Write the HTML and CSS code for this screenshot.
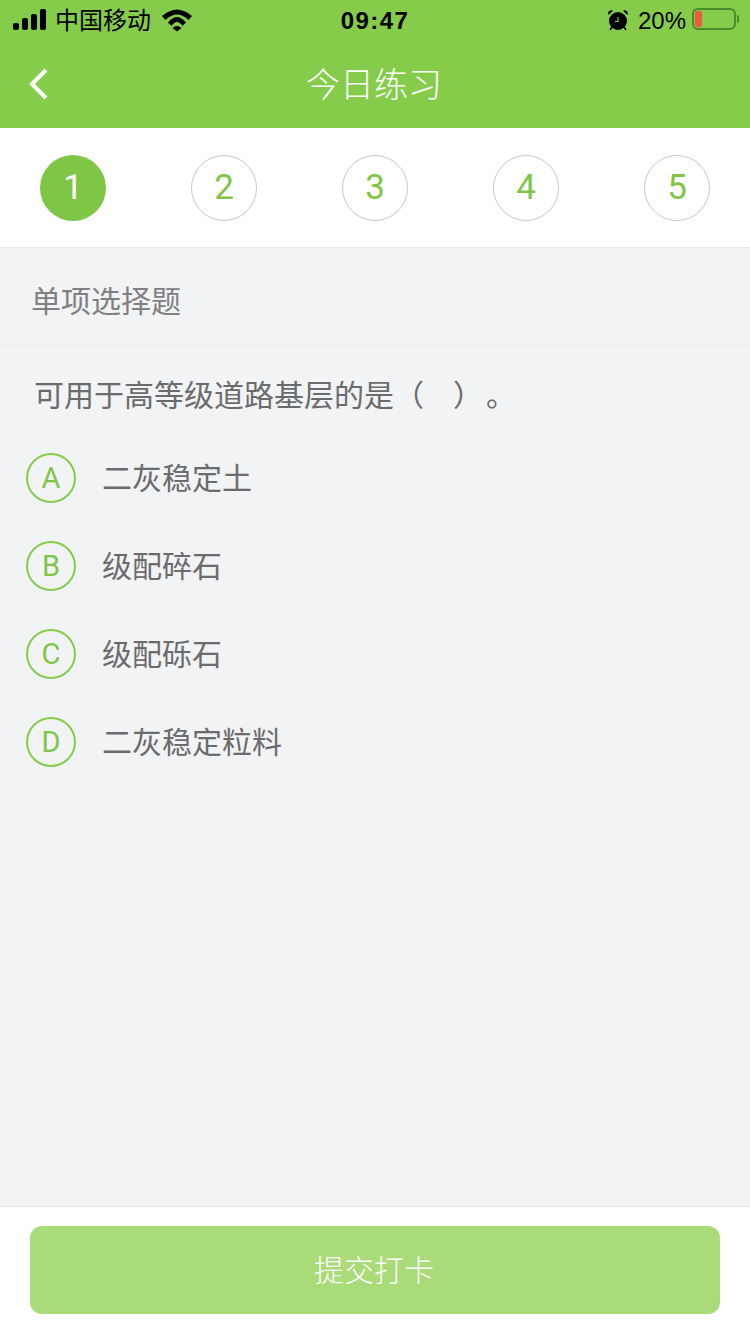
FILE: index.html

```html
<!DOCTYPE html>
<html lang="zh-CN">
<head>
    <meta charset="UTF-8">
    <title>今日练习</title>
    <link rel="stylesheet" href="styles.css">
</head>
<body>

<div class="top">
    <div class="status">
        <div class="status-left">
            <svg class="signal" width="34" height="22" viewBox="0 0 34 22">
                <rect x="0" y="14" width="6" height="7" rx="2"/>
                <rect x="9" y="9" width="6" height="12" rx="2"/>
                <rect x="18" y="5" width="6" height="16" rx="2"/>
                <rect x="27" y="0" width="6" height="21" rx="2"/>
            </svg>
            <span class="carrier">中国移动</span>
            <svg class="wifi" width="30" height="23" viewBox="0 0 30 23">
                <path d="M0 7 Q15 -6 30 7 L26.5 11 Q15 0 3.5 11 Z"/>
                <path d="M6 13.5 Q15 2.5 24 13.5 L20.5 17 Q15 9 9.5 17 Z"/>
                <path d="M10.5 19 Q15 15 19.5 19 L15 22.5 Z"/>
            </svg>
        </div>
        <div class="time">09:47</div>
        <div class="status-right">
            <svg class="alarm" width="22" height="22" viewBox="0 0 22 22">
                <circle cx="11" cy="12" r="9"/>
                <path d="M1.5 6 L6 1.8 A3.2 3.2 0 0 0 1.5 6 Z"/>
                <path d="M20.5 6 L16 1.8 A3.2 3.2 0 0 1 20.5 6 Z"/>
                <path d="M5 18 L3 21 M17 18 L19 21" stroke="#000" stroke-width="1.5"/>
                <path d="M11 8 V12.5 H8" stroke="#86cc4b" stroke-width="1.2" fill="none"/>
            </svg>
            <span class="percent">20%</span>
            <div class="battery">
                <div class="battery-level"></div>
            </div>
            <div class="battery-tip"></div>
        </div>
    </div>
    <div class="nav">
        <svg class="back" width="20" height="32" viewBox="0 0 20 32">
            <path d="M17 2 L3 16 L17 30"/>
        </svg>
        <h1>今日练习</h1>
    </div>
</div>

<div class="steps">
    <div class="step active">1</div>
    <div class="step">2</div>
    <div class="step">3</div>
    <div class="step">4</div>
    <div class="step">5</div>
</div>

<div class="section">单项选择题</div>

<div class="content">
    <p class="question">可用于高等级道路基层的是（<span class="blank"></span>）<span class="gap"></span>。</p>
    <div class="option"><span class="letter">A</span><span class="option-text">二灰稳定土</span></div>
    <div class="option"><span class="letter">B</span><span class="option-text">级配碎石</span></div>
    <div class="option"><span class="letter">C</span><span class="option-text">级配砾石</span></div>
    <div class="option"><span class="letter">D</span><span class="option-text">二灰稳定粒料</span></div>
</div>

<div class="footer">
    <div class="submit">提交打卡</div>
</div>

</body>
</html>
```

FILE: styles.css

```css
* {
    box-sizing: border-box;
}
html, body {
    height: 1334px;
    overflow: hidden;
}
body {
    margin: 0;
    display: flex;
    flex-direction: column;
    font-family: "Liberation Sans", "Noto Sans CJK SC", sans-serif;
    background-color: #f2f3f5;
    color: #666;
}
.top {
    height: 128px;
    background-color: #86cc4b;
}
.status {
    height: 40px;
    padding: 0 11px 0 13px;
    display: flex;
    align-items: center;
    justify-content: space-between;
    color: #000;
}
.status-left, .status-right {
    width: 260px;
    display: flex;
    align-items: center;
}
.status-right {
    justify-content: flex-end;
}
.carrier {
    margin: 0 0 4px 8px;
    font-size: 24px;
}
.wifi {
    margin-left: 11px;
}
.time {
    margin: 2px 2px 0 0;
    font-size: 24px;
    font-weight: bold;
    letter-spacing: 1.4px;
}
.alarm {
    margin-right: 9px;
}
.percent {
    margin: 2px 6px 0 0;
    font-size: 24px;
}
.battery {
    width: 44px;
    height: 22px;
    margin-bottom: 2px;
    padding: 1px;
    border: 2px solid #4e8a2c;
    border-radius: 6px;
}
.battery-level {
    width: 7px;
    height: 100%;
    border-radius: 2px;
    background-color: #ee5a3c;
}
.battery-tip {
    width: 2px;
    height: 8px;
    margin: 0 0 2px 1px;
    border-radius: 0 2px 2px 0;
    background-color: #4e8a2c;
}
.nav {
    position: relative;
    height: 88px;
    display: flex;
    align-items: center;
    justify-content: center;
}
.nav h1 {
    margin: 0 0 4px -2px;
    font-size: 34px;
    font-weight: 300;
    color: #fff;
}
.back {
    position: absolute;
    left: 29px;
    top: 28px;
    fill: none;
    stroke: #fff;
    stroke-width: 4;
}
.steps {
    height: 120px;
    padding: 0 40px;
    display: flex;
    align-items: center;
    justify-content: space-between;
    background-color: #fff;
    border-bottom: 1px solid #e8e8e8;
}
.step {
    width: 66px;
    height: 66px;
    display: flex;
    align-items: center;
    justify-content: center;
    border: 1px solid #c8c8c8;
    border-radius: 50%;
    font-family: Roboto, sans-serif;
    font-size: 35px;
    color: #7fc646;
}
.step.active {
    border: 0;
    background-color: #7fc646;
    color: #fff;
}
.section {
    height: 98px;
    padding: 4px 0 0 31px;
    display: flex;
    align-items: center;
    border-bottom: 1px solid #e9eaec;
    font-size: 30px;
    color: #808082;
}
.content {
    flex: 1;
}
.question {
    margin: 30px 0 0 34px;
    height: 40px;
    line-height: 40px;
    font-size: 30px;
    color: #6b6b6d;
}
.blank {
    display: inline-block;
    width: 29px;
}
.gap {
    display: inline-block;
    width: 3px;
}
.option {
    height: 88px;
    padding-left: 26px;
    display: flex;
    align-items: center;
    font-size: 30px;
    color: #6b6b6d;
}
.content .option:first-of-type {
    margin-top: 18px;
}
.option-text {
    margin-bottom: 4px;
}
.letter {
    width: 50px;
    height: 50px;
    margin-right: 26px;
    display: flex;
    align-items: center;
    justify-content: center;
    border: 2px solid #86cc4b;
    border-radius: 50%;
    font-family: Roboto, sans-serif;
    font-size: 29px;
    color: #7fc646;
}
.footer {
    height: 128px;
    padding: 19px 30px 0;
    background-color: #fff;
    border-top: 1px solid #e6e6e8;
}
.submit {
    height: 88px;
    padding: 0 2px 4px 0;
    display: flex;
    align-items: center;
    justify-content: center;
    border-radius: 12px;
    background-color: #a9db78;
    font-size: 30px;
    font-weight: 300;
    color: #fff;
}
```
